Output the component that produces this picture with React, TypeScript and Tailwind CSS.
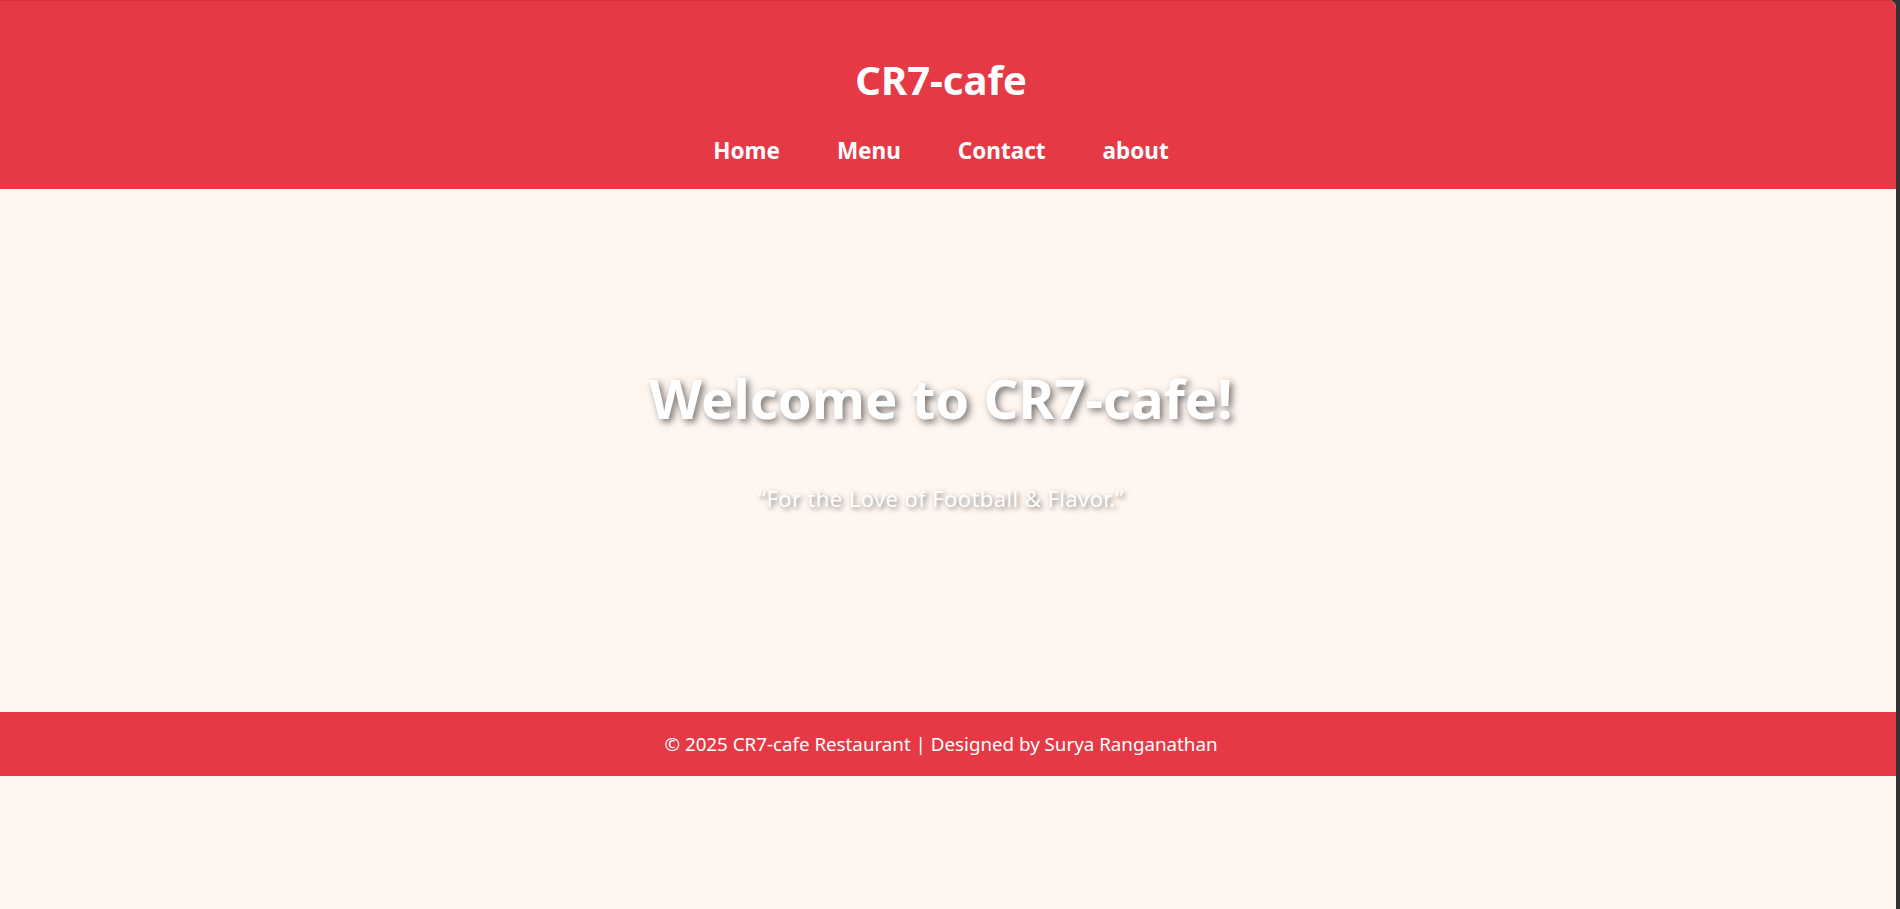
import React from "react";

export default function App() {
  const font = { fontFamily: '"Noto Sans", "Open Sans", sans-serif' };
  return (
    <div className="w-[1900px] h-[909px] bg-[#333333] flex overflow-hidden" style={font}>
      <div className="w-[1896px] h-[909px] bg-[#fff6f0] rounded-tr-[8px] overflow-hidden flex flex-col">
        <header className="bg-[#e63946] pt-[55px] pb-[22px] pr-[14px] flex flex-col items-center border-t border-[#d6333f]">
          <h1 className="text-white font-bold text-[40px] leading-[48px]">CR7-cafe</h1>
          <nav className="mt-[31px] flex justify-center gap-[57px]">
            {["Home", "Menu", "Contact", "about"].map((n) => (
              <a key={n} className="text-white font-bold text-[22.5px] leading-[32px]">
                {n}
              </a>
            ))}
          </nav>
        </header>
        <main className="h-[523px] pt-[175px] pr-[14px] flex flex-col items-center">
          <h2 className="text-white font-bold text-[54.5px] leading-[68px] [text-shadow:3px_3px_7px_rgba(0,0,0,0.55)]">
            Welcome to CR7-cafe!
          </h2>
          <p className="mt-[52px] text-white text-[22px] tracking-[0.4px] leading-[28px] [text-shadow:2px_2px_5px_rgba(0,0,0,0.5)]">
            “For the Love of Football &amp; Flavor.”
          </p>
        </main>
        <footer className="bg-[#e63946] h-[64px] pr-[14px] flex items-center justify-center">
          <p className="text-white text-[18.75px] leading-[28px]">
            © 2025 CR7-cafe Restaurant | Designed by Surya Ranganathan
          </p>
        </footer>
      </div>
    </div>
  );
}
